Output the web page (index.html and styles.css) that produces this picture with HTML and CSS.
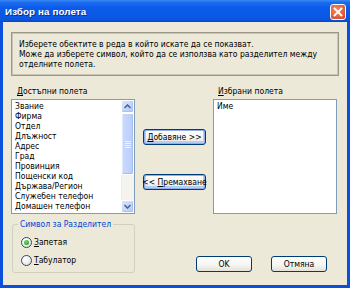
FILE: index.html
```html
<!DOCTYPE html>
<html lang="bg">
<head>
<meta charset="utf-8">
<title>Избор на полета</title>
<link rel="stylesheet" href="styles.css">
</head>
<body>
<div class="window">
  <div class="titlebar">
    <span class="title">Избор на полета</span>
    <span class="close"><svg width="10" height="10" viewBox="0 0 10 10"><path d="M1.5 1.5 L8.5 8.5 M8.5 1.5 L1.5 8.5" stroke="#fff" stroke-width="1.8" stroke-linecap="square"/></svg></span>
  </div>
  <div class="body">
    <div class="info">Изберете обектите в реда в който искате да се показват.<br>Може да изберете символ, който да се използва като разделител между<br>отделните полета.</div>
    <div class="fields">
      <div class="col">
        <div class="label"><u>Д</u>остъпни полета</div>
        <div class="list">
          <ul class="items">
            <li>Звание</li>
            <li>Фирма</li>
            <li>Отдел</li>
            <li>Длъжност</li>
            <li>Адрес</li>
            <li>Град</li>
            <li>Провинция</li>
            <li>Пощенски код</li>
            <li>Държава/Регион</li>
            <li>Служебен телефон</li>
            <li>Домашен телефон</li>
          </ul>
          <div class="scrollbar">
            <div class="sb-btn"><svg width="7" height="5" viewBox="0 0 7 5"><path d="M0.5 4 L3.5 1 L6.5 4" fill="none" stroke="#4d6185" stroke-width="1.5"/></svg></div>
            <div class="sb-thumb"><svg width="6" height="7" viewBox="0 0 6 7"><path d="M0 0.5 H6 M0 2.5 H6 M0 4.5 H6 M0 6.5 H6" stroke="#eef3ff" stroke-width="1"/></svg></div>
            <div class="sb-track"></div>
            <div class="sb-btn"><svg width="7" height="5" viewBox="0 0 7 5"><path d="M0.5 1 L3.5 4 L6.5 1" fill="none" stroke="#4d6185" stroke-width="1.5"/></svg></div>
          </div>
        </div>
      </div>
      <div class="mid">
        <div class="btn focus"><span><u>Д</u>обавяне &gt;&gt;</span></div>
        <div class="btn focus"><span>&lt;&lt; <u>П</u>ремахване</span></div>
      </div>
      <div class="col">
        <div class="label right"><u>И</u>збрани полета</div>
        <div class="list">
          <ul class="items"><li>Име</li></ul>
        </div>
      </div>
    </div>
    <div class="bottom">
      <fieldset class="group">
        <legend>Символ за Разделител</legend>
        <div class="radio"><span class="dot on"></span><span><u>З</u>апетая</span></div>
        <div class="radio"><span class="dot"></span><span><u>Т</u>абулатор</span></div>
      </fieldset>
      <div class="actions">
        <div class="btn ok"><span>OK</span></div>
        <div class="btn ok"><span>Отмяна</span></div>
      </div>
    </div>
  </div>
</div>
</body>
</html>
```
FILE: styles.css
```css
* { box-sizing: border-box; }
html, body { margin: 0; padding: 0; background: #ece9d8; }
body {
  width: 350px; height: 288px; overflow: hidden;
  font-family: "DejaVu Sans Condensed", "DejaVu Sans", sans-serif;
  font-stretch: condensed;
  font-size: 8.5px; color: #000;
}
u { text-decoration: underline; text-underline-offset: 1px; }
.window { width: 350px; height: 288px; display: flex; flex-direction: column; }
.titlebar {
  height: 22px; flex: none; display: flex; align-items: center;
  padding: 0 4px 0 5px;
  background: linear-gradient(to bottom, #3c8cf5 0%, #1d6cf0 10%, #0b5bea 35%, #0a58e6 70%, #0b56e0 88%, #0847c9 100%);
}
.title {
  font-family: "Liberation Sans", Arial, sans-serif; font-weight: bold;
  font-size: 9.8px; color: #fff; text-shadow: 1px 1px 0 #0a2f8f;
  letter-spacing: 0.1px;
}
.close {
  margin-left: auto; margin-top: 1px; width: 16px; height: 16px;
  border: 1px solid #fff; border-radius: 3px;
  background: radial-gradient(circle at 40% 35%, #f08c6c 0%, #e2623f 55%, #c8452a 100%);
  display: flex; align-items: center; justify-content: center;
}
.close svg { display: block; }
.body {
  flex: 1; border: 3px solid #0b4fdd; border-top: 0;
  padding: 10px 8px 0 8px;
}
.info {
  height: 44px; border: 1px solid #9b9888;
  box-shadow: inset 0 0 0 1px #c9c6b6;
  padding: 6px 7px; line-height: 10px; white-space: nowrap;
}
.fields {
  margin-top: 10px; display: grid;
  grid-template-columns: 124px 78px 124px;
}
.label { height: 10px; line-height: 10px; padding-left: 6px; margin-bottom: 3px; white-space: nowrap; }
.label.right { padding-left: 5px; }
.list {
  height: 115px; border: 1px solid #7f9db9; background: #fff;
  display: flex;
}
.items { flex: 1; list-style: none; margin: 0; padding: 1px 0 0 3px; }
.items li { line-height: 10px; height: 10px; white-space: nowrap; }
.scrollbar { width: 13px; display: flex; flex-direction: column; }
.sb-btn {
  height: 13px; flex: none; border: 1px solid #fff; border-radius: 2px;
  background: linear-gradient(135deg, #d9e4fe 0%, #c3d4fd 60%, #b5c8f7 100%);
  box-shadow: inset -1px -1px 0 #aac0ef;
  display: flex; align-items: center; justify-content: center;
}
.sb-thumb {
  height: 62px; flex: none; border: 1px solid #fff; border-radius: 2px;
  background: linear-gradient(to right, #cad9fd 0%, #c3d4fd 50%, #b8cbf8 100%);
  box-shadow: inset -1px -1px 0 #a9bfee, inset 1px 0 0 #dfe8ff;
  display: flex; align-items: center; justify-content: center;
}
.sb-thumb svg { display: block; }
.sb-track { flex: 1; background: #f4f3ee; border-left: 1px solid #eeede5; }
.mid { padding: 43px 0 0 8px; display: flex; flex-direction: column; gap: 29px; }
.btn {
  width: 63px; height: 16px; border: 1px solid #003c74; border-radius: 3px;
  background: linear-gradient(to bottom, #ffffff 0%, #f4f4f0 60%, #e4e2d8 100%);
  display: flex; align-items: center; justify-content: center;
  line-height: 10px; white-space: nowrap; overflow: visible;
}
.btn.focus { box-shadow: inset 0 0 0 1px #8fb0ec, inset 0 -1px 0 2px #b8cdf4; }
.bottom { margin-top: 5px; display: flex; align-items: flex-end; }
.group {
  margin: 0 0 0 1px; width: 123px;
  border: 1px solid #d0d0bf; border-radius: 3px;
  padding: 7px 4px 6px 4px;
}
.group legend {
  padding: 0 2px; margin-left: 1px; line-height: 10px; color: #0046d5; white-space: nowrap;
}
.radio { display: flex; align-items: center; height: 12px; padding-left: 4px; line-height: 10px; }
.radio + .radio { margin-top: 6px; }
.dot {
  width: 11px; height: 11px; border-radius: 50%; border: 1px solid #1c5180;
  background: radial-gradient(circle at 35% 30%, #ffffff 0%, #f2f1ea 50%, #d4d0c2 100%);
  margin-right: 2px; flex: none;
  display: flex; align-items: center; justify-content: center;
}
.dot.on::after {
  content: ""; width: 5px; height: 5px; border-radius: 50%;
  background: radial-gradient(circle at 40% 35%, #6fe06a 0%, #2ea82a 70%, #1f8f1c 100%);
}
.actions { margin: 0 12px 1px auto; display: flex; gap: 19px; }
.btn.ok { width: 56px; }
```
